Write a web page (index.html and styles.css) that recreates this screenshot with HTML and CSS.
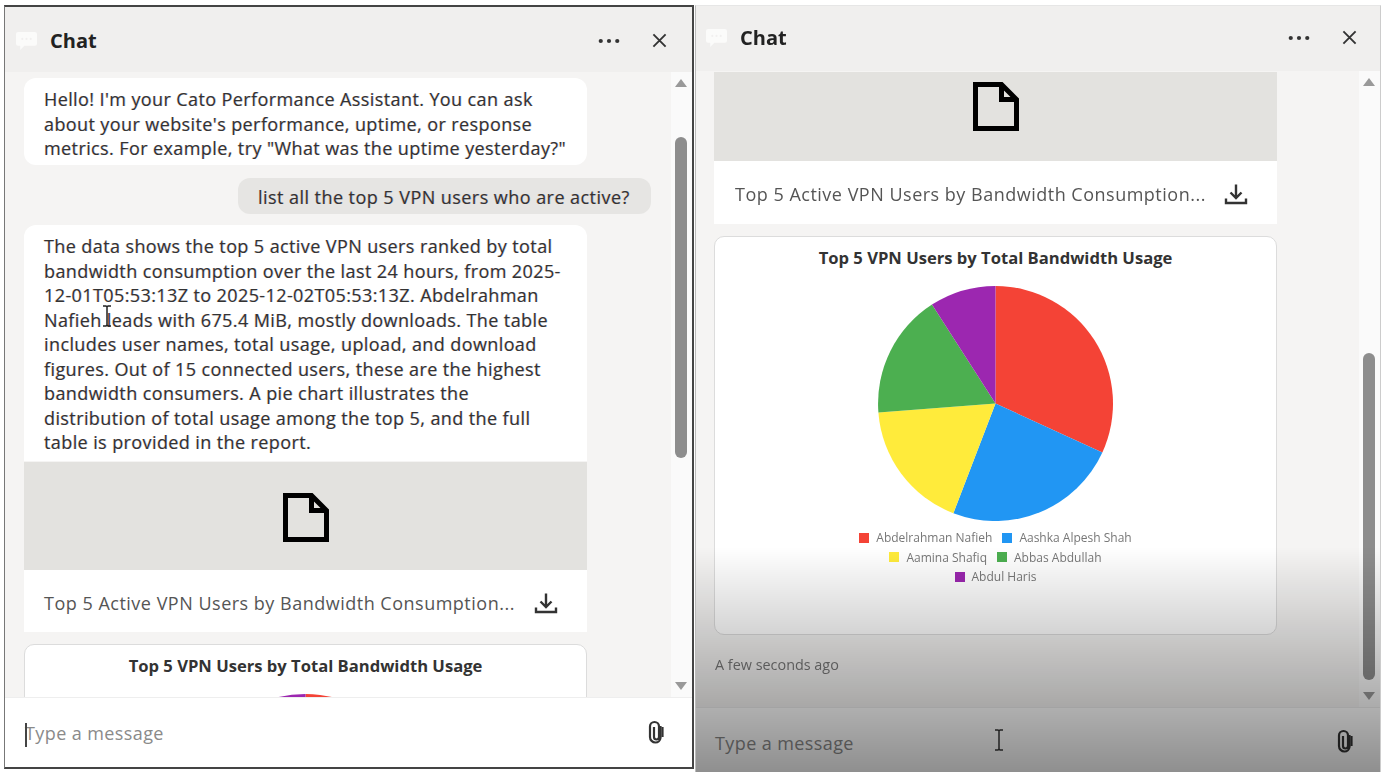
FILE: index.html
```html
<!DOCTYPE html>
<html lang="en">
<head>
<meta charset="utf-8">
<title>Chat</title>
<link rel="stylesheet" href="styles.css">
</head>
<body>
<main class="app">
  <section class="pane pane-left">
    <header class="head">
      <svg class="chat-ico" viewBox="0 0 20 17"><path fill="#fbfbfa" d="M2 0h16a2 2 0 0 1 2 2v9a2 2 0 0 1-2 2H8l-4 4v-4H2a2 2 0 0 1-2-2V2a2 2 0 0 1 2-2z"/><g fill="#f1f0ef"><circle cx="6" cy="6.500" r="1"/><circle cx="10" cy="6.500" r="1"/><circle cx="14" cy="6.500" r="1"/></g></svg>
      <h1 class="title">Chat</h1>
      <svg class="more" viewBox="0 0 24 6"><circle cx="3" cy="3" r="2.300"/><circle cx="12" cy="3" r="2.300"/><circle cx="21" cy="3" r="2.300"/></svg>
      <svg class="close" viewBox="0 0 16 16"><path d="M1.500 1.500l13 13M14.500 1.500l-13 13"/></svg>
    </header>
    <div class="body">
      <div class="msgs">
        <p class="bubble bot first">Hello! I'm your Cato Performance Assistant. You can ask about your website's performance, uptime, or response metrics. For example, try "What was the uptime yesterday?"</p>
        <p class="bubble user">list all the top 5 VPN users who are active?</p>
        <p class="bubble bot answer">The data shows the top 5 active VPN users ranked by total bandwidth consumption over the last 24 hours, from 2025-12-01T05:53:13Z to 2025-12-02T05:53:13Z. Abdelrahman Nafieh leads with 675.4 MiB, mostly downloads. The table includes user names, total usage, upload, and download figures. Out of 15 connected users, these are the highest bandwidth consumers. A pie chart illustrates the distribution of total usage among the top 5, and the full table is provided in the report.</p>
        <div class="file">
          <div class="preview preview-full">
            <svg class="doc" viewBox="0 0 46 49"><path d="M2.500 2.500h26l15 15v29h-41zM28.500 2.500v15h15"/></svg>
          </div>
          <div class="caption">
            <span class="name">Top 5 Active VPN Users by Bandwidth Consumption...</span>
            <svg class="dl" viewBox="0 0 24 24"><path d="M12 2.500v13M6.500 10.500l5.500 5.500 5.500-5.500M2 16.500v4.500h20v-4.500"/></svg>
          </div>
        </div>
        <div class="chart">
          <h2 class="chart-title">Top 5 VPN Users by Total Bandwidth Usage</h2>
          <svg class="pie" viewBox="-118 -118 236 236">
            <path fill="#f44336" d="M0 0V-118A118 118 0 0 1 107.300 49.100z"/>
            <path fill="#2196f3" d="M0 0L107.300 49.100A118 118 0 0 1 -42.300 110.200z"/>
            <path fill="#ffeb3b" d="M0 0L-42.300 110.200A118 118 0 0 1 -117.600 9z"/>
            <path fill="#4caf50" d="M0 0L-117.600 9A118 118 0 0 1 -63.800 -99.300z"/>
            <path fill="#9c27b0" d="M0 0L-63.800 -99.300A118 118 0 0 1 0 -118z"/>
          </svg>
        </div>
      </div>
      <div class="bar">
        <span class="arrow up"></span>
        <div class="track"><span class="thumb thumb-left"></span></div>
        <span class="arrow down"></span>
      </div>
    </div>
    <footer class="foot foot-left">
      <span class="caret"></span>
      <span class="placeholder">Type a message</span>
      <svg class="clip" viewBox="0 0 18 24"><path d="M13.500 6v12a5 5 0 0 1-5 4.500A5.500 5.500 0 0 1 3 17V6.500a4.500 4.500 0 0 1 9 0V17a2.500 2.500 0 0 1-5 0V7"/><path d="M15.500 7v10"/></svg>
    </footer>
    <svg class="ibeam ibeam-left" viewBox="0 0 10 22"><path d="M1 1h3l1 1 1-1h3M5 2v18M1 21h3l1-1 1 1h3"/></svg>
  </section>

  <section class="pane pane-right">
    <header class="head head-right">
      <svg class="chat-ico" viewBox="0 0 20 17"><path fill="#fbfbfa" d="M2 0h16a2 2 0 0 1 2 2v9a2 2 0 0 1-2 2H8l-4 4v-4H2a2 2 0 0 1-2-2V2a2 2 0 0 1 2-2z"/><g fill="#f1f0ef"><circle cx="6" cy="6.500" r="1"/><circle cx="10" cy="6.500" r="1"/><circle cx="14" cy="6.500" r="1"/></g></svg>
      <h1 class="title">Chat</h1>
      <svg class="more" viewBox="0 0 24 6"><circle cx="3" cy="3" r="2.300"/><circle cx="12" cy="3" r="2.300"/><circle cx="21" cy="3" r="2.300"/></svg>
      <svg class="close" viewBox="0 0 16 16"><path d="M1.500 1.500l13 13M14.500 1.500l-13 13"/></svg>
    </header>
    <div class="body">
      <div class="msgs msgs-right">
        <div class="file">
          <div class="preview preview-cut">
            <svg class="doc" viewBox="0 0 46 49"><path d="M2.500 2.500h26l15 15v29h-41zM28.500 2.500v15h15"/></svg>
          </div>
          <div class="caption">
            <span class="name">Top 5 Active VPN Users by Bandwidth Consumption...</span>
            <svg class="dl" viewBox="0 0 24 24"><path d="M12 2.500v13M6.500 10.500l5.500 5.500 5.500-5.500M2 16.500v4.500h20v-4.500"/></svg>
          </div>
        </div>
        <div class="chart">
          <h2 class="chart-title">Top 5 VPN Users by Total Bandwidth Usage</h2>
          <svg class="pie" viewBox="-118 -118 236 236">
            <path fill="#f44336" d="M0 0V-118A118 118 0 0 1 107.300 49.100z"/>
            <path fill="#2196f3" d="M0 0L107.300 49.100A118 118 0 0 1 -42.300 110.200z"/>
            <path fill="#ffeb3b" d="M0 0L-42.300 110.200A118 118 0 0 1 -117.600 9z"/>
            <path fill="#4caf50" d="M0 0L-117.600 9A118 118 0 0 1 -63.800 -99.300z"/>
            <path fill="#9c27b0" d="M0 0L-63.800 -99.300A118 118 0 0 1 0 -118z"/>
          </svg>
          <ul class="legend">
            <li class="key"><i class="sw sw-red"></i>Abdelrahman Nafieh</li>
            <li class="key"><i class="sw sw-blue"></i>Aashka Alpesh Shah</li>
            <li class="break"></li>
            <li class="key"><i class="sw sw-yellow"></i>Aamina Shafiq</li>
            <li class="key"><i class="sw sw-green"></i>Abbas Abdullah</li>
            <li class="break"></li>
            <li class="key"><i class="sw sw-purple"></i>Abdul Haris</li>
          </ul>
        </div>
        <p class="stamp">A few seconds ago</p>
      </div>
      <div class="bar bar-right">
        <span class="arrow up"></span>
        <div class="track"><span class="thumb thumb-right"></span></div>
        <span class="arrow down"></span>
      </div>
    </div>
    <footer class="foot foot-right">
      <span class="placeholder">Type a message</span>
      <svg class="clip" viewBox="0 0 18 24"><path d="M13.500 6v12a5 5 0 0 1-5 4.500A5.500 5.500 0 0 1 3 17V6.500a4.500 4.500 0 0 1 9 0V17a2.500 2.500 0 0 1-5 0V7"/><path d="M15.500 7v10"/></svg>
    </footer>
    <div class="fade"></div>
    <svg class="ibeam ibeam-right" viewBox="0 0 10 22"><path d="M1 1h3l1 1 1-1h3M5 2v18M1 21h3l1-1 1 1h3"/></svg>
  </section>
</main>
</body>
</html>
```

FILE: styles.css
```css
* { box-sizing: border-box; }
html, body { margin: 0; height: 100%; background: #fff; overflow: hidden; }
body { font-family: "Open Sans", "Noto Sans", sans-serif; color: #333; }

.app { display: flex; align-items: flex-start; gap: 1px; padding: 5px 3px 0 4px; height: 772px; filter: blur(0.35px); }
.pane { position: relative; display: flex; flex-direction: column; overflow: hidden; background: #f5f4f3; }
.pane-left { width: 690px; height: 764px; border: 2px solid #444; border-left-width: 1px; border-left-color: #777; }
.pane-right { width: 686px; height: 767px; border-top: 1px solid #e6e6e6; border-right: 1px solid #ccc; border-left: 1px solid #bbb; }

.head { flex: none; display: flex; align-items: center; height: 65px; padding: 2px 25px 0 11px; background: #f0efee; }
.head-right { height: 65px; padding: 0 23px 2px 10px; }
.chat-ico { width: 21px; height: 18px; flex: none; }
.title { margin: 0 0 0 13px; font-size: 20px; font-weight: 700; color: #222; flex: 1; }
.more { width: 22px; height: 6px; fill: #333; margin-right: 32px; flex: none; }
.close { width: 15px; height: 15px; stroke: #333; stroke-width: 2; fill: none; flex: none; }

.body { flex: 1; min-height: 0; display: flex; }
.msgs { flex: 1; min-width: 0; overflow: hidden; display: flex; flex-direction: column; align-items: flex-start; padding: 6px 0 0 19px; }
.msgs-right { padding: 0 0 0 18px; }

.bubble { margin: 0; font-size: 18px; letter-spacing: 0.4px; line-height: 24.500px; text-shadow: -0.6px 0 rgba(215,110,20,.3), 0.6px 0 rgba(20,100,220,.3); }
.bot { width: 563px; flex: none; padding: 9px 20px 9px; background: #fff; border-radius: 12px; }
.first { height: 87px; }
.user { flex: none; align-self: flex-start; margin: 13px 0 11px 214px; height: 36px; padding: 7px 20px 0; width: 413px; letter-spacing: 0.45px; background: #e6e5e3; border-radius: 12px; white-space: nowrap; }
.answer { height: 236px; border-radius: 12px 12px 0 0; padding-top: 9px; }

.file { width: 563px; flex: none; display: flex; flex-direction: column; margin-top: 1px; background: #fff; }
.preview { display: flex; align-items: center; justify-content: center; background: #e3e2df; }
.preview-full { height: 108px; padding-top: 2px; }
.preview-cut { height: 89px; padding-bottom: 20px; }
.doc { width: 46px; height: 49px; fill: none; stroke: #000; stroke-width: 5; stroke-linejoin: miter; }
.caption { display: flex; align-items: center; justify-content: space-between; height: 62px; padding: 4px 29px 0 20px; }
.msgs-right .caption { height: 63px; padding: 2px 29px 0 21px; }
.name { font-size: 18px; letter-spacing: 0.5px; color: #555; white-space: nowrap; }
.dl { width: 24px; height: 24px; fill: none; stroke: #333; stroke-width: 2.400; flex: none; }

.chart { width: 563px; flex: none; height: 399px; margin-top: 12px; padding-top: 9px; background: #fff; border: 1px solid #dcdcdc; border-radius: 10px; display: flex; flex-direction: column; align-items: center; }
.chart-title { margin: 0; font-size: 16.600px; line-height: 24px; font-weight: 700; color: #333; }
.pie { width: 235px; height: 235px; flex: none; margin-top: 16px; }
.legend { list-style: none; margin: 7px 0 0; padding: 0; display: flex; flex-wrap: wrap; justify-content: center; column-gap: 10px; row-gap: 0; }
.break { flex-basis: 100%; height: 0; }
.key { display: flex; align-items: center; gap: 7px; font-size: 12px; line-height: 19.500px; color: #777; }
.sw { display: block; width: 10px; height: 10px; }
.sw-red { background: #f44336; }
.sw-blue { background: #2196f3; }
.sw-yellow { background: #ffeb3b; }
.sw-green { background: #4caf50; }
.sw-purple { background: #9c27b0; }
.stamp { margin: 20px 0 0 1px; font-size: 14.400px; color: #777; }

.bar { flex: none; width: 21px; background: #fafafa; display: flex; flex-direction: column; align-items: center; padding: 7px 2px 7px 0; }
.bar-right { padding: 7px 2px 7px 0; }
.arrow { flex: none; width: 0; height: 0; border-left: 6.500px solid transparent; border-right: 6.500px solid transparent; }
.up { border-bottom: 8px solid #999; }
.down { border-top: 8px solid #999; }
.track { flex: 1; width: 12px; }
.thumb { display: block; width: 12px; background: #8d8d8d; border-radius: 6px; }
.thumb-left { height: 321px; margin-top: 50px; }
.thumb-right { height: 327px; margin-top: 267px; }

.foot { flex: none; display: flex; align-items: center; justify-content: space-between; background: #fff; position: relative; }
.foot-left { height: 70px; padding: 0 27px 0 20px; border-top: 1px solid #eee; }
.foot-right { height: 65px; padding: 6px 26px 0 19px; border-top: 1px solid #eee; }
.foot-right .clip { margin-bottom: 4px; }
.foot-left .clip { margin-bottom: 2px; }
.placeholder { font-size: 18px; letter-spacing: 0.4px; color: #8a8a8a; }
.caret { position: absolute; left: 20px; top: 25px; width: 2px; height: 24px; background: #444; }
.clip { width: 18px; height: 24px; fill: none; stroke: #333; stroke-width: 2.200; flex: none; }

.fade { position: absolute; left: 0; right: 0; bottom: 0; height: 225px; pointer-events: none; background: linear-gradient(to bottom, rgba(0,0,0,0), rgba(0,0,0,.44)); }
.ibeam { position: absolute; width: 10px; height: 22px; fill: none; stroke: #222; stroke-width: 1.500; }
.ibeam-left { left: 97px; top: 298px; }
.ibeam-right { left: 298px; top: 723px; }
```
